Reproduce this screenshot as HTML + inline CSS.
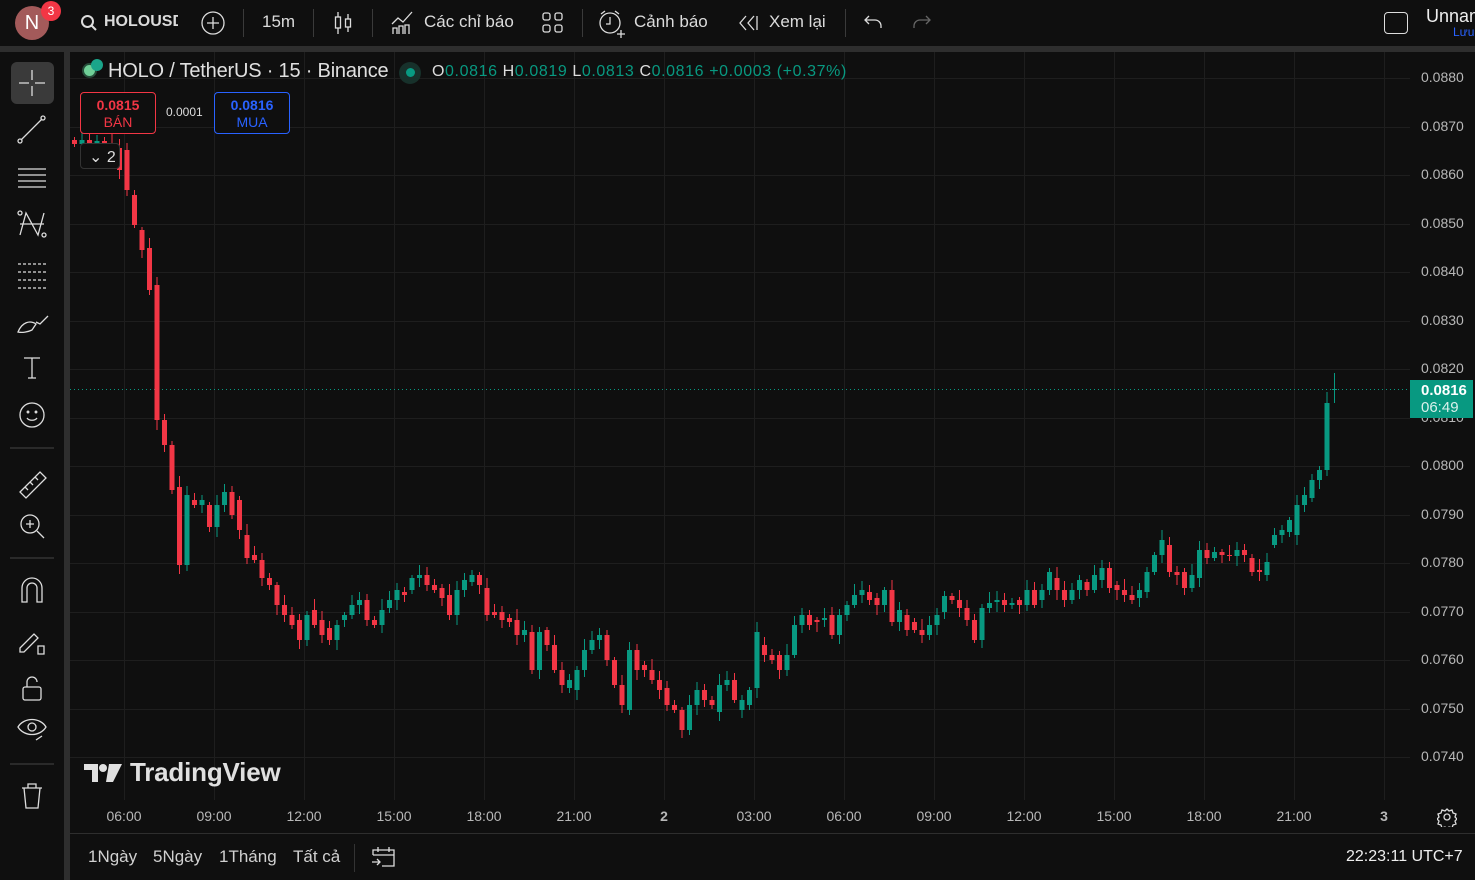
<!DOCTYPE html>
<html><head><meta charset="utf-8"><style>
*{margin:0;padding:0;box-sizing:border-box}
body{width:1475px;height:880px;background:#0f0f0f;font-family:"Liberation Sans",sans-serif;color:#d1d4dc;position:relative;overflow:hidden}
.abs{position:absolute}
.tb{font-size:17px;color:#dbdbdb;top:11px}
.sep{position:absolute;top:9px;width:1px;height:28px;background:#3a3a3a}
.pl{position:absolute;left:1421px;font-size:14px;color:#b8b8b8}
.tl{position:absolute;top:808px;font-size:14px;color:#b8b8b8;transform:translateX(-50%)}
.bt{position:absolute;top:847px;font-size:17px;color:#d0d0d0}
</style></head><body>
<div class="abs" style="left:0;top:46px;width:1475px;height:6px;background:#2e2e2e"></div>
<div class="abs" style="left:15px;top:6px;width:34px;height:34px;border-radius:50%;background:#a35a5a;color:#fff;font-size:20px;text-align:center;line-height:34px">N</div>
<div class="abs" style="left:41px;top:1px;width:20px;height:20px;border-radius:50%;background:#f23645;color:#fff;font-size:12px;text-align:center;line-height:20px">3</div>
<svg class="abs" style="left:80px;top:14px" width="18" height="18"><circle cx="7.5" cy="7.5" r="5.5" fill="none" stroke="#ddd" stroke-width="2"/><path d="M11.5 11.5L16 16" stroke="#ddd" stroke-width="2"/></svg>
<div class="abs tb" style="left:104px;font-weight:bold;width:74px;overflow:hidden;white-space:nowrap;font-size:16px;top:13px">HOLOUSDT</div>
<svg class="abs" style="left:200px;top:10px" width="26" height="26"><circle cx="13" cy="13" r="11" fill="none" stroke="#ddd" stroke-width="1.3"/><path d="M13 7v12M7 13h12" stroke="#ddd" stroke-width="1.3"/></svg>
<div class="sep" style="left:243px"></div>
<div class="abs tb" style="left:262px;top:12px">15m</div>
<div class="sep" style="left:313px"></div>
<svg class="abs" style="left:332px;top:10px" width="22" height="26"><path d="M6 2v22M16 4v18" stroke="#ddd" stroke-width="1.3"/><rect x="3.5" y="7" width="5" height="11" fill="#0f0f0f" stroke="#ddd" stroke-width="1.3"/><rect x="13.5" y="9" width="5" height="8" fill="#0f0f0f" stroke="#ddd" stroke-width="1.3"/></svg>
<div class="sep" style="left:372px"></div>
<svg class="abs" style="left:390px;top:10px" width="26" height="26"><path d="M2 14l6-6 5 4 9-10" fill="none" stroke="#ddd" stroke-width="1.3"/><path d="M3 24v-6h4v6M9 24v-8h4v8M15 24v-9h4v9" fill="none" stroke="#ddd" stroke-width="1.3"/></svg>
<div class="abs tb" style="left:424px;top:12px">Các chỉ báo</div>
<svg class="abs" style="left:541px;top:11px" width="24" height="24"><rect x="2" y="2" width="7" height="7" rx="2" fill="none" stroke="#ddd" stroke-width="1.3"/><rect x="14" y="2" width="7" height="7" rx="2" fill="none" stroke="#ddd" stroke-width="1.3"/><rect x="2" y="14" width="7" height="7" rx="2" fill="none" stroke="#ddd" stroke-width="1.3"/><rect x="14" y="14" width="7" height="7" rx="2" fill="none" stroke="#ddd" stroke-width="1.3"/></svg>
<div class="sep" style="left:582px"></div>
<svg class="abs" style="left:597px;top:8px" width="30" height="30"><circle cx="13" cy="15" r="10" fill="none" stroke="#ddd" stroke-width="1.3"/><path d="M13 9v7h-4M4 6l4-3M22 6l-4-3M24 22v8M20 26h8" fill="none" stroke="#ddd" stroke-width="1.3"/></svg>
<div class="abs tb" style="left:634px;top:12px">Cảnh báo</div>
<svg class="abs" style="left:737px;top:14px" width="22" height="18"><path d="M9 2L3 9l6 7M17 2l-6 7 6 7M20 2v14" fill="none" stroke="#ddd" stroke-width="1.3"/></svg>
<div class="abs tb" style="left:769px;top:12px">Xem lại</div>
<div class="sep" style="left:845px"></div>
<svg class="abs" style="left:863px;top:13px" width="22" height="18"><path d="M6 3L2 7l4 4M2 7h10a6 6 0 0 1 6 6v2" fill="none" stroke="#ddd" stroke-width="1.3"/></svg>
<svg class="abs" style="left:910px;top:13px" width="22" height="18"><path d="M16 3l4 4-4 4M20 7H10a6 6 0 0 0-6 6v2" fill="none" stroke="#666" stroke-width="1.3"/></svg>
<div class="abs" style="left:1384px;top:12px;width:24px;height:22px;border:1.5px solid #ddd;border-radius:4px"></div>
<div class="abs" style="left:1426px;top:6px;font-size:18px;color:#eee;white-space:nowrap">Unnamed</div>
<div class="abs" style="left:1453px;top:25px;font-size:12px;color:#2962ff">Lưu</div>
<div class="abs" style="left:64px;top:52px;width:6px;height:828px;background:#2e2e2e"></div>
<div class="abs" style="left:11px;top:62px;width:43px;height:42px;border-radius:6px;background:#3a3a3a"></div>
<svg class="abs" style="left:0;top:52px" width="64" height="780" fill="none" stroke="#ddd" stroke-width="1.3">
<path d="M32 18v10M32 34v10M19 31h10M35 31h10"/>
<path d="M21 88l21-21"/><circle cx="20" cy="89" r="2"/><circle cx="43" cy="66" r="2"/>
<path d="M18 117h28M18 123h28M18 129h28M18 135h28"/>
<path d="M20 183l6-22 12 22 6-22M20 172h24"/><circle cx="20" cy="161" r="2"/><circle cx="44" cy="183" r="2"/>
<path d="M18 212h28M18 220h28M18 228h28M18 236h28" stroke-dasharray="3 2"/>
<path d="M18 280c4-10 12-12 18-8l-4 6c-4 2-10 3-14 2zM36 270l4 2 8-8"/>
<path d="M24 306h16M32 306v20M28 326h8"/>
<circle cx="32" cy="363" r="12"/><path d="M27 366c2 3 8 3 10 0"/><circle cx="28" cy="360" r=".8"/><circle cx="36" cy="360" r=".8"/>
<path d="M10 396h44" stroke="#3a3a3a"/>
<path d="M20 440l20-20 6 6-20 20zM25 435l3 3M30 430l3 3M35 425l3 3"/>
<circle cx="30" cy="472" r="9"/><path d="M37 479l7 7M26 472h8M30 468v8"/>
<path d="M10 506h44" stroke="#3a3a3a"/>
<path d="M22 550v-14a10 10 0 0 1 20 0v14h-5v-14a5 5 0 0 0-10 0v14z"/>
<path d="M20 596l14-14 4 4-14 14h-4zM38 594h6v8h-6z"/>
<rect x="23" y="635" width="18" height="13" rx="2"/><path d="M27 635v-5a5 5 0 0 1 10 0"/>
<path d="M18 675c6-10 22-10 28 0c-6 10-22 10-28 0z"/><circle cx="32" cy="675" r="4"/><path d="M36 688l6-4"/>
<path d="M10 712h44" stroke="#3a3a3a"/>
<path d="M22 736h20M28 736v-4h8v4M24 736l2 20h12l2-20"/>
</svg>
<svg class="abs" style="left:0;top:0" width="1475" height="880">
<g stroke="#1e1e1e" stroke-width="1" id="grid"></g>
<line x1="70" y1="389.5" x2="1410" y2="389.5" stroke="#089981" stroke-dasharray="1 3"/>
<g id="cd"></g>
<line x1="70" y1="833.5" x2="1475" y2="833.5" stroke="#2e2e2e"/>
</svg>
<div id="pls"></div><div id="tls"></div>
<div class="abs" style="left:1410px;top:380px;width:63px;height:38px;background:#089981;color:#fff;font-size:15px;line-height:17px;padding:2px 0 0 11px"><b style="font-weight:600">0.0816</b><br><span style="color:#d8f0eb">06:49</span></div>
<svg class="abs" style="left:1437px;top:807px" width="20" height="20" fill="none" stroke="#ddd" stroke-width="1.3"><circle cx="10" cy="10" r="3"/><path d="M10 2l2 2 3-1 1 3 3 1-1 3 2 2-2 2 1 3-3 1-1 3-3-1-2 2-2-2-3 1-1-3-3-1 1-3-2-2 2-2-1-3 3-1 1-3 3 1z"/></svg>
<div class="abs" style="left:82px;top:63px;width:15px;height:15px;border-radius:50%;background:#6fcf97;border:2px solid #264d3a"></div>
<div class="abs" style="left:91px;top:59px;width:12px;height:12px;border-radius:50%;background:#1aa58a"></div>
<div class="abs" style="left:108px;top:60px;font-size:20px;color:#e0e0e0;letter-spacing:-0.2px">HOLO / TetherUS · 15 · Binance</div>
<div class="abs" style="left:399px;top:62px;width:22px;height:22px;border-radius:50%;background:#17312b"></div>
<div class="abs" style="left:406px;top:68px;width:9px;height:9px;border-radius:50%;background:#089981"></div>
<div class="abs" style="left:432px;top:63px;font-size:16px;color:#089981;white-space:nowrap;letter-spacing:0.6px"><span style="color:#ddd">O</span>0.0816 <span style="color:#ddd">H</span>0.0819 <span style="color:#ddd">L</span>0.0813 <span style="color:#ddd">C</span>0.0816 +0.0003 (+0.37%)</div>
<div class="abs" style="left:80px;top:92px;width:76px;height:42px;border:1px solid #f23645;border-radius:4px;text-align:center;color:#f23645;font-size:14px;line-height:17px;padding-top:4px;background:#0f0f0f"><b>0.0815</b><br>BÁN</div>
<div class="abs" style="left:166px;top:105px;font-size:12px;color:#ddd">0.0001</div>
<div class="abs" style="left:214px;top:92px;width:76px;height:42px;border:1px solid #2962ff;border-radius:4px;text-align:center;color:#2962ff;font-size:14px;line-height:17px;padding-top:4px;background:#0f0f0f"><b>0.0816</b><br>MUA</div>
<div class="abs" style="left:80px;top:143px;width:40px;height:26px;border:1px solid #333;border-radius:4px;background:#0f0f0f;color:#ddd;font-size:16px;padding:3px 0 0 8px">⌄ 2</div>
<svg class="abs" style="left:84px;top:762px" width="40" height="22"><path d="M0 2h14v18h-6V8H0z" fill="#e0e0e0"/><circle cx="19" cy="6" r="4" fill="#e0e0e0"/><path d="M25 2h13l-9 18h-7z" fill="#e0e0e0"/></svg>
<div class="abs" style="left:130px;top:757px;font-size:26px;font-weight:bold;color:#e0e0e0;letter-spacing:-0.2px">TradingView</div>
<div class="bt" style="left:88px">1Ngày</div>
<div class="bt" style="left:153px">5Ngày</div>
<div class="bt" style="left:219px">1Tháng</div>
<div class="bt" style="left:293px">Tất cả</div>
<div class="abs" style="left:354px;top:844px;width:1px;height:28px;background:#333"></div>
<svg class="abs" style="left:371px;top:845px" width="26" height="24" fill="none" stroke="#ddd" stroke-width="1.3"><path d="M2 10V5h21v16h-12M2 10h21M7 2v5M18 2v5M1 17h8M6 14l3 3-3 3"/></svg>
<div class="abs" style="left:1346px;top:848px;font-size:16px;color:#eee">22:23:11 UTC+7</div>
<script>
var g=document.getElementById('grid'),s='',pl='',tl='';
var prices=['0.0880','0.0870','0.0860','0.0850','0.0840','0.0830','0.0820','0.0810','0.0800','0.0790','0.0780','0.0770','0.0760','0.0750','0.0740'];
for(var i=0;i<15;i++){var y=78+i*48.5;s+='<line x1="70" x2="1410" y1="'+(Math.round(y)+0.5)+'" y2="'+(Math.round(y)+0.5)+'"/>';pl+='<div class="pl" style="top:'+(y-9)+'px">'+prices[i]+'</div>';}
var times=['06:00','09:00','12:00','15:00','18:00','21:00','2','03:00','06:00','09:00','12:00','15:00','18:00','21:00','3'];
for(var i=0;i<15;i++){var x=124+i*90;s+='<line y1="52" y2="800" x1="'+(x+0.5)+'" x2="'+(x+0.5)+'"/>';tl+='<div class="tl" style="left:'+x+'px;'+(times[i].length<2?'font-weight:bold;':'')+'">'+times[i]+'</div>';}
g.innerHTML=s;document.getElementById('pls').innerHTML=pl;document.getElementById('tls').innerHTML=tl;
var d=[[140,144],[144,140],[140,143],[143,141],[141,145],[145,148],[148,170],[150,190],[195,225],[230,250],[248,290],[285,420],[420,445],[445,490],[487,565],[565,495],[500,505],[505,500],[505,527],[527,505],[505,492],[492,515],[500,530],[535,558],[555,560],[560,578],[578,585],[585,605],[605,615],[615,625],[620,640],[640,615],[610,625],[620,635],[628,640],[640,625],[620,615],[615,605],[605,600],[600,620],[620,625],[625,610],[608,600],[600,590],[592,595],[590,578],[578,575],[575,585],[585,590],[588,598],[595,615],[615,590],[590,580],[582,575],[575,585],[588,615],[612,615],[612,620],[618,622],[620,635],[635,630],[632,670],[670,632],[630,645],[645,670],[670,685],[688,680],[690,670],[670,650],[650,640],[640,635],[635,660],[660,685],[685,705],[710,650],[650,670],[665,670],[670,680],[680,690],[688,705],[705,710],[710,730],[730,705],[705,690],[690,700],[700,705],[712,685],[685,680],[680,700],[710,700],[705,690],[688,632],[645,655],[655,660],[655,670],[670,655],[655,625],[625,615],[615,625],[620,622],[620,618],[615,635],[635,615],[615,605],[605,595],[595,590],[592,600],[598,605],[605,590],[590,622],[622,610],[615,630],[622,630],[630,635],[635,625],[625,615],[612,596],[596,600],[600,608],[608,620],[620,640],[640,608],[608,603],[602,600],[600,605],[605,603],[600,605],[605,590],[590,605],[600,590],[590,572],[578,590],[590,600],[600,590],[590,580],[582,590],[590,575],[580,568],[568,588],[585,590],[590,595],[595,600],[598,590],[592,572],[572,555],[555,540],[545,572],[572,575],[572,588],[588,575],[578,550],[550,558],[558,552],[552,555],[555,556],[556,550],[550,555],[558,572],[570,572],[575,562],[545,535],[535,530],[532,520],[535,505],[505,495],[498,480],[480,470],[470,403],[390,389]];
var c='';
for(var i=0;i<d.length;i++){var x=72+i*7.5,o=d[i][0],cl=d[i][1],up=cl<o,col=up?'#089981':'#f23645';
var t=Math.min(o,cl),b=Math.max(o,cl);var h=Math.max(1,b-t);var w1=t-3-((i*7)%9),w2=b+3+((i*5)%8);
if(i==d.length-1){w1=373;w2=403;}
c+='<line x1="'+(x+2.5)+'" x2="'+(x+2.5)+'" y1="'+w1+'" y2="'+w2+'" stroke="'+col+'"/><rect x="'+x+'" y="'+t+'" width="5" height="'+h+'" fill="'+col+'"/>';}
document.getElementById('cd').innerHTML=c;
</script>
</body></html>
